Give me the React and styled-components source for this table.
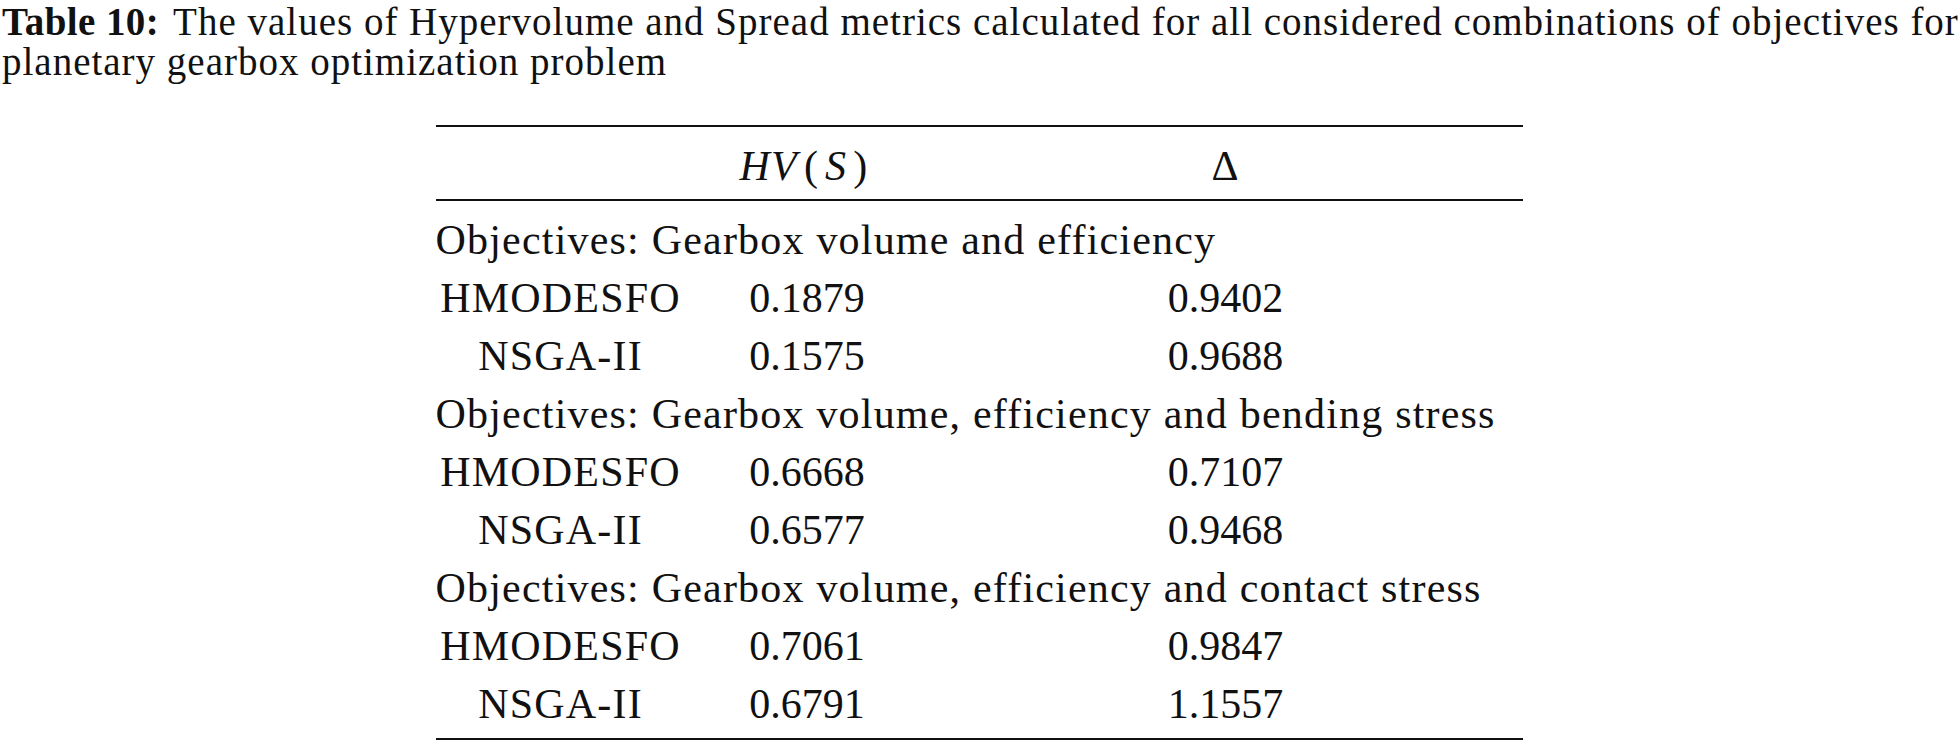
import React from 'react'
import styled, { createGlobalStyle } from 'styled-components'

const GlobalStyle = createGlobalStyle`
  html, body {
    margin: 0;
    padding: 0;
    background: #ffffff;
  }
  body {
    font-family: 'Liberation Serif', 'Times New Roman', serif;
    color: #111111;
  }
`

const Page = styled.div`
  width: 1958px;
  height: 742px;
  overflow: hidden;
`

const Caption = styled.p`
  margin: 0;
  padding: 2px 0 0 2px;
  font-size: 39px;
  line-height: 40px;
  letter-spacing: 1px;
  white-space: nowrap;
`

const Label = styled.b`
  font-weight: 700;
  letter-spacing: 0.4px;
  margin-right: 14px;
`

const Table = styled.div`
  width: 1087px;
  margin: 0 auto;
  margin-top: 43px;
  display: grid;
  grid-template-columns: 250px 243px 594px;
  font-size: 42px;
  line-height: 58px;
  letter-spacing: 1.2px;
  border-top: 2px solid #111;
  border-bottom: 2px solid #111;
`

const Head = styled.div`
  grid-column: 1 / -1;
  display: grid;
  grid-template-columns: subgrid;
  padding: 10px 0 4px;
  border-bottom: 2px solid #111;
`

const Body = styled.div`
  grid-column: 1 / -1;
  display: grid;
  grid-template-columns: subgrid;
  padding: 10px 0 5px;
`

const Cell = styled.div`
  text-align: center;
  white-space: nowrap;
  letter-spacing: ${(p) => (p.$num ? '0' : 'inherit')};
`

const Group = styled.div`
  grid-column: 1 / -1;
  white-space: nowrap;
`

const Math = styled.span`
  font-style: italic;
`

const Paren = styled.span`
  font-style: normal;
  margin: 0 6px;
`

const groups = [
  {
    title: 'Objectives: Gearbox volume and efficiency',
    rows: [
      ['HMODESFO', '0.1879', '0.9402'],
      ['NSGA-II', '0.1575', '0.9688'],
    ],
  },
  {
    title: 'Objectives: Gearbox volume, efficiency and bending stress',
    rows: [
      ['HMODESFO', '0.6668', '0.7107'],
      ['NSGA-II', '0.6577', '0.9468'],
    ],
  },
  {
    title: 'Objectives: Gearbox volume, efficiency and contact stress',
    rows: [
      ['HMODESFO', '0.7061', '0.9847'],
      ['NSGA-II', '0.6791', '1.1557'],
    ],
  },
]

export default function App() {
  return (
    <Page>
      <GlobalStyle />
      <Caption>
        <Label>Table 10:</Label>
        The values of Hypervolume and Spread metrics calculated for all considered combinations of objectives for
        <br />
        planetary gearbox optimization problem
      </Caption>
      <Table>
        <Head>
          <Cell />
          <Cell>
            <Math>HV</Math>
            <Paren>(</Paren>
            <Math>S</Math>
            <Paren>)</Paren>
          </Cell>
          <Cell>Δ</Cell>
        </Head>
        <Body>
          {groups.map((g) => (
            <React.Fragment key={g.title}>
              <Group>{g.title}</Group>
              {g.rows.map((r) => (
                <React.Fragment key={r[0] + r[1]}>
                  <Cell>{r[0]}</Cell>
                  <Cell $num>{r[1]}</Cell>
                  <Cell $num>{r[2]}</Cell>
                </React.Fragment>
              ))}
            </React.Fragment>
          ))}
        </Body>
      </Table>
    </Page>
  )
}
